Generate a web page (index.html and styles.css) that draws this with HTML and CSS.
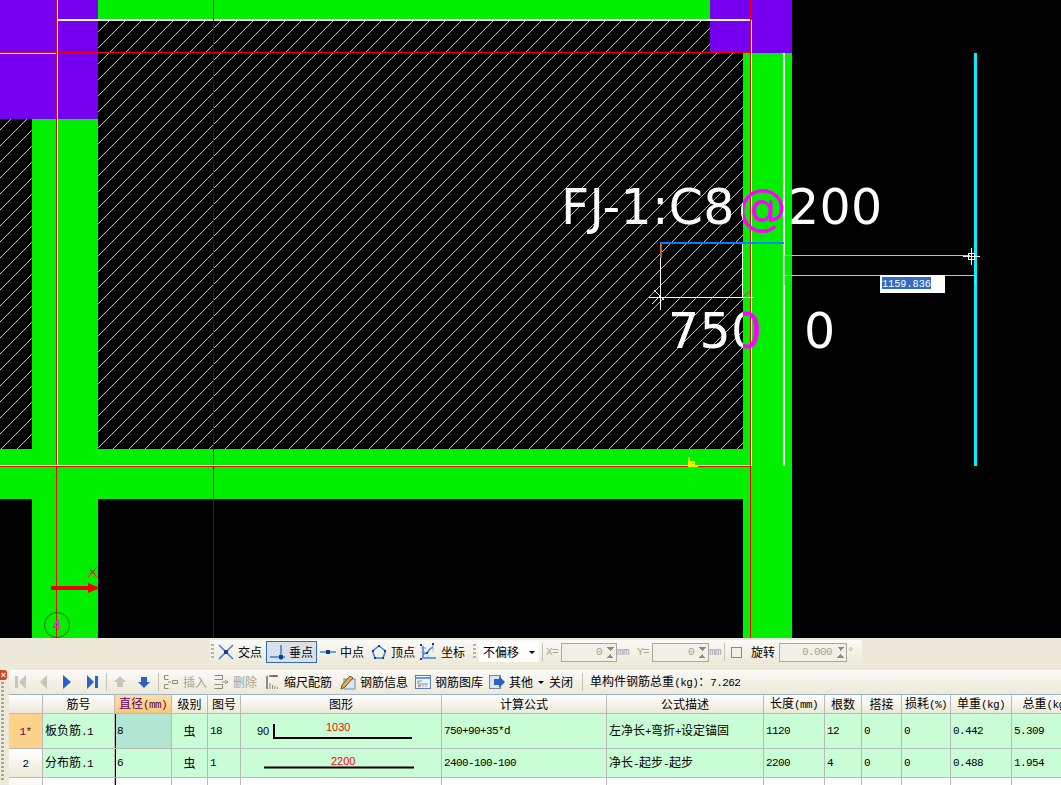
FILE: index.html
```html
<!DOCTYPE html>
<html lang="zh-CN">

<head>
    <meta charset="UTF-8">
    <title>钢筋编辑</title>
    <link rel="stylesheet" href="styles.css">
</head>

<body>
    <svg class="cad" width="1061" height="638" viewBox="0 0 1061 638" shape-rendering="crispEdges">
        <defs>
            <pattern id="hatch" width="16" height="16" patternUnits="userSpaceOnUse" patternTransform="translate(2 0)">
                <path d="M-4 20L20 -4" class="hatch-line" />
            </pattern>
            <linearGradient id="textfill" gradientUnits="userSpaceOnUse" x1="0" y1="0" x2="1061" y2="0">
                <stop offset="0.70028" stop-color="#fff" />
                <stop offset="0.70028" stop-color="#f0f" />
                <stop offset="0.74" stop-color="#f0f" />
                <stop offset="0.74" stop-color="#fff" />
            </linearGradient>
        </defs>
        <rect class="black" width="1061" height="638" />
        <rect fill="url(#hatch)" x="98" y="20" width="645" height="429" />
        <rect fill="url(#hatch)" x="0" y="119" width="32" height="330" />
        <rect class="green" x="98" y="0" width="612" height="19" />
        <rect class="green" x="0" y="449" width="792" height="50" />
        <rect class="green" x="32" y="119" width="66" height="519" />
        <rect class="green" x="743" y="53" width="49" height="585" />
        <rect class="purple" x="0" y="0" width="98" height="119" />
        <rect class="purple" x="710" y="0" width="82" height="53" />

        <rect class="white" x="58" y="19" width="692" height="2" />
        <rect class="white" x="0" y="53" width="56" height="1" />
        <rect class="red" x="0" y="52" width="750" height="1" />
        <rect class="white" x="57" y="0" width="1" height="466" />
        <rect class="red" x="56" y="0" width="1" height="638" />
        <rect class="darkred" x="213" y="0" width="1" height="638" />
        <rect class="white" x="0" y="465" width="750" height="1" />
        <rect class="red" x="0" y="466" width="750" height="1" />
        <rect class="red" x="750" y="0" width="1" height="638" />
        <rect class="white" x="751" y="20" width="1" height="446" />
        <rect class="white" x="783" y="53" width="2" height="413" />
        <rect class="cyan" x="974" y="53" width="3" height="413" />

        <path class="yellow" d="M689 457V466H698M691 462H694V465H691Z" />

        <text class="big" x="561" y="224">FJ-1:C8<tspan dx="3">@</tspan><tspan dx="1">200</tspan></text>
        <text class="big" x="668" y="348">750</text>
        <text class="big" x="804" y="348">0</text>

        <rect class="white" x="660" y="258" width="1" height="52" />
        <rect class="white" x="649" y="297" width="105" height="1" />
        <rect class="white" x="742" y="244" width="1" height="53" />
        <path class="thin-white" d="M652 304L661 295M654 290L664 300" shape-rendering="auto" />
        <path class="thin-magenta" d="M743 297L750 291" shape-rendering="auto" />
        <rect class="blue" x="660" y="242" width="124" height="2" />
        <rect class="blue" x="660" y="242" width="2" height="16" />
        <rect class="orange" x="660" y="244" width="1" height="14" />

        <rect class="grey" x="785" y="255" width="185" height="1" />
        <rect class="grey" x="785" y="275" width="190" height="1" />
        <rect class="grey" x="784" y="255" width="1" height="30" />
        <rect class="grey" x="975" y="275" width="1" height="10" />
        <path class="thin-white" d="M971.500 248V265M963 256.500H980M968.500 253.500H974.500V259.500H968.500Z" />

        <rect class="white" x="880" y="275" width="65" height="18" />
        <rect class="selection" x="882" y="277" width="49" height="12" />
        <text class="dim-input" x="882" y="287">1159.836</text>

        <rect class="red" x="51" y="586" width="40" height="4" />
        <path class="red" d="M88 583L100 588L88 593Z" shape-rendering="auto" />
        <path class="mark" d="M88 567L97 577M97 567L88 577" />
        <circle class="axis-ring" cx="57" cy="625" r="12.500" shape-rendering="auto" />
        <text class="axis-no" x="53" y="630">4</text>
    </svg>

    <div class="snapbar">
        <div class="bar snap">
            <span class="grip"></span>
            <span class="tool">
                <svg width="16" height="16" viewBox="0 0 16 16"><path class="ic-line" d="M1 1L15 15M15 1L1 15" /><rect class="ic-dot" x="6" y="6" width="4" height="4" /></svg>
                交点
            </span>
            <span class="tool on">
                <svg width="16" height="16" viewBox="0 0 16 16"><path class="ic-line" d="M1 13H16M12 1V16" /><rect class="ic-dot" x="10" y="11" width="4" height="4" /></svg>
                垂点
            </span>
            <span class="tool snap-mid">
                <svg width="16" height="16" viewBox="0 0 16 16"><path class="ic-line" d="M0 8H16" /><rect class="ic-dot" x="6" y="6" width="4" height="4" /></svg>
                中点
            </span>
            <span class="tool snap-top">
                <svg width="16" height="16" viewBox="0 0 16 16"><path class="ic-line" d="M8 2L14.500 7L12 14H4L1.500 7Z" /><path class="ic-dot" d="M7 1H9V3H7ZM13 6H15V8H13ZM11 13H13V15H11ZM3 13H5V15H3ZM1 6H3V8H1Z" /></svg>
                顶点
            </span>
            <span class="tool snap-xy">
                <svg width="18" height="18" viewBox="0 0 18 18"><path class="ic-line" d="M4 3V15H17M4 11L8 10L11 6L14 4" /><path class="ic-dash" d="M2 5H8M2 9H6M9 12V16M14 2V9" /><path class="ic-dot" d="M1 1H3V3H1ZM13 0H15V2H13ZM1 15H3V17H1ZM7 9H9V11H7Z" /></svg>
                坐标
            </span>
            <span class="grip second"></span>
            <span class="combo">不偏移<i class="caret"></i></span>
            <span class="sep"></span>
            <span class="off lat first-lat">X=</span>
            <span class="spin x-spin"><span class="lat">0</span><i class="updown"></i></span>
            <span class="off lat">mm</span>
            <span class="off lat y-label">Y=</span>
            <span class="spin y-spin"><span class="lat">0</span><i class="updown"></i></span>
            <span class="off lat">mm</span>
            <span class="sep"></span>
            <span class="check"></span>
            <span class="rotate-label">旋转</span>
            <span class="spin rot-spin"><span class="lat">0.000</span><i class="updown"></i></span>
            <span class="off lat">°</span>
        </div>
    </div>

    <div class="editor">
        <div class="side">
            <span class="close">×</span>
            <span class="side-grip"></span>
        </div>
        <div class="main">
            <div class="bar rebar-tools">
                <svg class="nav" width="11" height="16" viewBox="0 0 11 16"><path class="ic-off" d="M0 2H3V14H0ZM11 1V15L4 8Z" /></svg>
                <svg class="nav" width="10" height="16" viewBox="0 0 10 16"><path class="ic-off" d="M8 1V15L1 8Z" /></svg>
                <svg class="nav nav-wide" width="10" height="16" viewBox="0 0 10 16"><path class="ic-blue" d="M1 1V15L9 8Z" /></svg>
                <svg class="nav nav-end" width="11" height="16" viewBox="0 0 11 16"><path class="ic-blue" d="M0 1V15L7 8ZM8 2H11V14H8Z" /></svg>
                <span class="sep sep-a"></span>
                <svg class="nav nav-up" width="12" height="12" viewBox="0 0 12 12"><path class="ic-off" d="M6 0L12 6H9V11H3V6H0Z" /></svg>
                <svg class="nav nav-end" width="12" height="12" viewBox="0 0 12 12"><path class="ic-blue" d="M3 1H9V6H12L6 12L0 6H3Z" /></svg>
                <span class="sep sep-b"></span>
                <span class="tool off tool-insert">
                    <svg width="16" height="16" viewBox="0 0 16 16"><path class="ic-grey" d="M5.500 1.500H1.500V5.500H5.500M5.500 10.500H1.500V14.500H5.500M5 8H8M9.500 6.500H14.500V9.500H9.500Z" /></svg>
                    插入
                </span>
                <span class="tool off tool-delete">
                    <svg width="16" height="16" viewBox="0 0 16 16"><path class="ic-grey" d="M1.500 1.500H9.500V5.500M1.500 5.500H9.500M1.500 10.500H9.500M1.500 14.500H9.500V10.500M9 8H13M12 6L15 8L12 10" /></svg>
                    删除
                </span>
                <span class="tool">
                    <svg width="14" height="16" viewBox="0 0 14 16"><path class="ic-black" d="M1 2V15M3 2H12" /><path class="ic-red" d="M5 2H11" /><path class="ic-grey" d="M4 15V9M6.500 15V11M9 15V12M11.500 15V13" /></svg>
                    缩尺配筋
                </span>
                <span class="tool tool-info">
                    <svg width="16" height="16" viewBox="0 0 16 16"><rect class="ic-sheet" x="4" y="5" width="11" height="10" /><path class="ic-pencil" d="M2 11L10 2L13 4L5 13L1 15Z" /></svg>
                    钢筋信息
                </span>
                <span class="tool tool-lib">
                    <svg width="16" height="14" viewBox="0 0 16 14"><rect class="ic-window" x="0.500" y="0.500" width="15" height="13" /><path class="ic-line" d="M1 3H15" /><path class="ic-grey" d="M3 6H7M3 6V9H13" /><path class="ic-red" d="M3 11H6" /><path class="ic-dash" d="M7 11H13" /></svg>
                    钢筋图库
                </span>
                <span class="tool more">
                    <svg width="16" height="16" viewBox="0 0 16 16"><rect class="ic-sheet" x="0.500" y="1.500" width="11" height="13" /><path class="ic-blue" d="M5 5H10V2L16 8L10 14V11H5Z" /></svg>
                    其他<i class="caret"></i>
                </span>
                <span class="tool tool-close">关闭</span>
                <span class="sep sep-c"></span>
                <span class="total">单构件钢筋总重<span class="lat">(kg)</span>：<span class="lat">7.262</span></span>
            </div>

            <table class="grid">
                <colgroup>
                    <col class="c-row">
                    <col class="c-name">
                    <col class="c-dia">
                    <col class="c-grade">
                    <col class="c-fig">
                    <col class="c-shape">
                    <col class="c-calc">
                    <col class="c-desc">
                    <col class="c-len">
                    <col class="c-count">
                    <col class="c-lap">
                    <col class="c-loss">
                    <col class="c-unit">
                    <col class="c-total">
                </colgroup>
                <thead>
                    <tr>
                        <th></th>
                        <th>筋号</th>
                        <th class="picked">直径<span class="lat">(mm)</span></th>
                        <th>级别</th>
                        <th>图号</th>
                        <th>图形</th>
                        <th>计算公式</th>
                        <th>公式描述</th>
                        <th>长度<span class="lat">(mm)</span></th>
                        <th>根数</th>
                        <th>搭接</th>
                        <th>损耗<span class="lat">(%)</span></th>
                        <th>单重<span class="lat">(kg)</span></th>
                        <th>总重<span class="lat">(kg)</span></th>
                    </tr>
                </thead>
                <tbody>
                    <tr class="row-one">
                        <th class="current"><span class="lat">1*</span></th>
                        <td>板负筋<span class="lat">.1</span></td>
                        <td class="dia sel lat">8</td>
                        <td class="mid">虫</td>
                        <td class="lat">18</td>
                        <td class="figure">
                            <svg width="200" height="34" viewBox="0 0 200 34">
                                <text class="fig-text" x="16" y="21">90</text>
                                <path class="fig-bar" d="M33 10V24H171" />
                                <text class="fig-len" x="85" y="17">1030</text>
                            </svg>
                        </td>
                        <td class="lat">750+90+35*d</td>
                        <td>左净长<span class="lat">+</span>弯折<span class="lat">+</span>设定锚固</td>
                        <td class="lat">1120</td>
                        <td class="lat">12</td>
                        <td class="lat">0</td>
                        <td class="lat">0</td>
                        <td class="lat">0.442</td>
                        <td class="lat">5.309</td>
                    </tr>
                    <tr class="row-two">
                        <th><span class="lat">2</span></th>
                        <td>分布筋<span class="lat">.1</span></td>
                        <td class="dia lat">6</td>
                        <td class="mid">虫</td>
                        <td class="lat">1</td>
                        <td class="figure">
                            <svg width="200" height="28" viewBox="0 0 200 28">
                                <path class="fig-bar" d="M23 18.500H173" />
                                <text class="fig-len" x="90" y="16">2200</text>
                            </svg>
                        </td>
                        <td class="lat">2400-100-100</td>
                        <td>净长<span class="lat">-</span>起步<span class="lat">-</span>起步</td>
                        <td class="lat">2200</td>
                        <td class="lat">4</td>
                        <td class="lat">0</td>
                        <td class="lat">0</td>
                        <td class="lat">0.488</td>
                        <td class="lat">1.954</td>
                    </tr>
                    <tr class="row-three">
                        <th><span class="lat">3</span></th>
                        <td></td>
                        <td class="dia"></td>
                        <td></td>
                        <td></td>
                        <td></td>
                        <td></td>
                        <td></td>
                        <td></td>
                        <td></td>
                        <td></td>
                        <td></td>
                        <td></td>
                        <td></td>
                    </tr>
                </tbody>
            </table>
        </div>
    </div>
</body>

</html>
```

FILE: styles.css
```css
* {
    margin: 0;
    padding: 0;
    box-sizing: border-box;
}

html,
body {
    width: 1061px;
    height: 785px;
    overflow: hidden;
}

body {
    background: #ece9d8;
    color: #000;
    font: 12px/16px "Noto Sans CJK SC", sans-serif;
}

/* 画布 */
.cad {
    display: block;
}

.black { fill: #000; }
.green { fill: #00f000; }
.purple { fill: #7800f0; }
.white { fill: #fff; }
.red { fill: #f00000; }
.darkred { fill: #780000; }
.cyan { fill: #00f0ff; }
.blue { fill: #0080ff; }
.orange { fill: #e07020; }
.grey { fill: #c0c0c0; }
.selection { fill: #316ac5; }

.hatch-line {
    stroke: #c0c0c0;
    stroke-width: 1;
}

.yellow {
    fill: none;
    stroke: #f0f000;
    stroke-width: 2;
}

.big {
    fill: url(#textfill);
    font-family: "DejaVu Sans", sans-serif;
    font-size: 49px;
    letter-spacing: .3px;
}

.thin-white {
    fill: none;
    stroke: #fff;
    stroke-width: 1;
}

.thin-magenta {
    fill: none;
    stroke: #f0f;
    stroke-width: 1;
}

.dim-input {
    fill: #fff;
    font-family: "Liberation Mono", monospace;
    font-size: 10.200px;
}

.mark {
    fill: none;
    stroke: #d03030;
    stroke-width: 1;
}

.axis-ring {
    fill: none;
    stroke: #107010;
    stroke-width: 1;
}

.axis-no {
    fill: #b050b0;
    font-family: "Liberation Sans", sans-serif;
    font-size: 14px;
    font-weight: bold;
}

/* 通用 */
.lat {
    font-family: "Liberation Mono", monospace;
    font-size: 11px;
    letter-spacing: -.6px;
}

.bar {
    display: flex;
    align-items: center;
    background: linear-gradient(#fbfaf6, #ece9d8);
}

.tool {
    display: flex;
    align-items: center;
    gap: 4px;
    height: 21px;
    white-space: nowrap;
}

.sep {
    width: 1px;
    height: 18px;
    background: #c5c2b8;
}

.off {
    color: #a5a396;
}

.grip {
    width: 3px;
    height: 16px;
    background: repeating-linear-gradient(#b5b3a8 0 2px, transparent 2px 4px);
}

.caret {
    display: block;
    width: 0;
    height: 0;
    border: 3px solid transparent;
    border-top: 3px solid #000;
    border-bottom: 0;
}

.ic-line,
.ic-dash,
.ic-grey,
.ic-black,
.ic-red {
    fill: none;
    stroke-width: 1;
}

.ic-line { stroke: #3a80d8; stroke-width: 1.500; }
.ic-dash { stroke: #7aa0d0; stroke-dasharray: 2 1; }
.ic-grey { stroke: #8a8a80; }
.ic-black { stroke: #222; }
.ic-red { stroke: #e02020; }
.ic-dot { fill: #123a98; }
.ic-off { fill: #c8c6bb; }
.ic-blue { fill: #2a62c8; }
.ic-sheet { fill: #dbe6f4; stroke: #7088a8; }
.ic-pencil { fill: #e8b050; stroke: #705020; }
.ic-window { fill: #eef2f8; stroke: #5a80b8; }

/* 捕捉工具条 */
.snapbar {
    display: flex;
    height: 32px;
    padding: 2px 0 0 210px;
}

.snap {
    width: 652px;
    height: 24px;
    padding-left: 1px;
}

.snap .tool {
    margin-left: 4px;
}

.snap .tool:nth-child(2) {
    margin-left: 4px;
}

.snap .tool.on {
    height: 22px;
    margin-left: 4px;
    padding: 0 3px 0 2px;
    background: #dbe0e8;
    border: 1px solid #316ac5;
}

.snap .snap-mid {
    margin-left: 3px;
}

.snap .snap-top {
    margin-left: 7px;
}

.snap .snap-xy {
    margin-left: 4px;
}

.snap .grip.second {
    margin-left: 8px;
}

.combo {
    display: flex;
    align-items: center;
    justify-content: space-between;
    width: 60px;
    height: 20px;
    margin-left: 3px;
    padding: 0 4px;
    background: #fff;
}

.snap .sep {
    margin: 0 3px;
}

.spin {
    display: flex;
    align-items: center;
    justify-content: flex-end;
    gap: 5px;
    height: 19px;
    padding-right: 2px;
    color: #a5a396;
    background: #f1efe6;
    border: 1px solid #aca899;
}

.first-lat {
    width: 15px;
}

.x-spin {
    width: 56px;
}

.y-label {
    margin-left: 8px;
    width: 15px;
}

.y-spin {
    width: 57px;
}

.rot-spin {
    width: 68px;
    margin-left: 4px;
}

.updown {
    display: block;
    width: 7px;
    height: 11px;
    background:
        linear-gradient(45deg, transparent 50%, #8e8c80 50%) 0 0 / 4px 4px no-repeat,
        linear-gradient(-45deg, transparent 50%, #8e8c80 50%) 3px 0 / 4px 4px no-repeat,
        linear-gradient(135deg, transparent 50%, #8e8c80 50%) 0 7px / 4px 4px no-repeat,
        linear-gradient(-135deg, transparent 50%, #8e8c80 50%) 3px 7px / 4px 4px no-repeat;
}

.check {
    width: 11px;
    height: 11px;
    margin-left: 3px;
    background: #f1efe6;
    border: 1px solid #8a8878;
}

.rotate-label {
    margin-left: 9px;
}

/* 钢筋编辑 */
.editor {
    display: flex;
    height: 115px;
}

.side {
    width: 9px;
}

.close {
    display: block;
    width: 7px;
    height: 10px;
    border-radius: 0 3px 3px 0;
    background: #d84020;
    color: #fff;
    font: bold 9px/10px "Liberation Sans", sans-serif;
    text-align: center;
}

.side-grip {
    display: block;
    width: 3px;
    height: 100px;
    margin: 2px 0 0 1px;
    background: repeating-linear-gradient(#a8a698 0 2px, transparent 2px 4px);
}

.main {
    width: 1052px;
    overflow: hidden;
}

.rebar-tools {
    height: 25px;
    padding-left: 6px;
    border-bottom: 1px solid #9db4d0;
}

.nav {
    flex: none;
    margin-right: 13px;
}

.nav-wide {
    margin-right: 15px;
}

.nav-up {
    margin-right: 12px;
}

.nav-end {
    margin-right: 8px;
}

.sep-a {
    margin-right: 7px;
}

.sep-b {
    margin-right: 4px;
}

.sep-c {
    margin-right: 7px;
}

.rebar-tools .tool {
    margin-right: 8px;
}

.rebar-tools .tool-insert {
    margin-right: 6px;
}

.rebar-tools .tool-delete {
    margin-right: 9px;
}

.rebar-tools .tool-info {
    margin-right: 7px;
}

.rebar-tools .tool-lib {
    margin-right: 6px;
}

.rebar-tools .more {
    margin-right: 5px;
}

.rebar-tools .tool-close {
    margin-right: 9px;
}

.more .caret {
    margin-left: 1px;
}

.total {
    white-space: nowrap;
}

/* 表格 */
.grid {
    table-layout: fixed;
    width: 1073px;
    border-collapse: separate;
    border-spacing: 0;
}

.c-row { width: 34px; }
.c-name { width: 72px; }
.c-dia { width: 57px; }
.c-grade { width: 36px; }
.c-fig { width: 33px; }
.c-shape { width: 201px; }
.c-calc { width: 165px; }
.c-desc { width: 157px; }
.c-len { width: 61px; }
.c-count { width: 37px; }
.c-lap { width: 40px; }
.c-loss { width: 49px; }
.c-unit { width: 61px; }
.c-total { width: 70px; }

.grid th,
.grid td {
    overflow: hidden;
    padding: 0 0 0 2px;
    border-right: 1px solid #b9b9b9;
    border-bottom: 1px solid #b9b9b9;
    white-space: nowrap;
    font-weight: normal;
}

.grid th {
    padding: 0;
    text-align: center;
    background: linear-gradient(#fff, #ece9d8);
}

.grid thead th {
    height: 19px;
}

.grid thead th.picked {
    color: #600060;
    background: linear-gradient(#fde0a8, #f9c878);
}

.grid td {
    background: #c9fdd6;
}

.grid .current {
    color: #600060;
    background: #fdd28a;
}

.grid .sel {
    background: #b3e6d2;
}

.grid .mid {
    padding: 0;
    text-align: center;
}

.grid .dia {
    box-shadow: inset 1px 0 #000;
}

.grid .figure {
    padding: 0;
    line-height: 0;
}

.row-one th,
.row-one td {
    height: 34px;
}

.row-two th,
.row-two td {
    height: 29px;
}

.row-three th,
.row-three td {
    height: 20px;
    background: #fff;
}

.row-three th {
    background: linear-gradient(#fff, #ece9d8);
}

.fig-text {
    font-family: "Liberation Sans", sans-serif;
    font-size: 11px;
}

.fig-len {
    fill: #f00;
    font-family: "Liberation Sans", sans-serif;
    font-size: 11px;
}

.fig-bar {
    fill: none;
    stroke: #000;
    stroke-width: 2;
}
```
